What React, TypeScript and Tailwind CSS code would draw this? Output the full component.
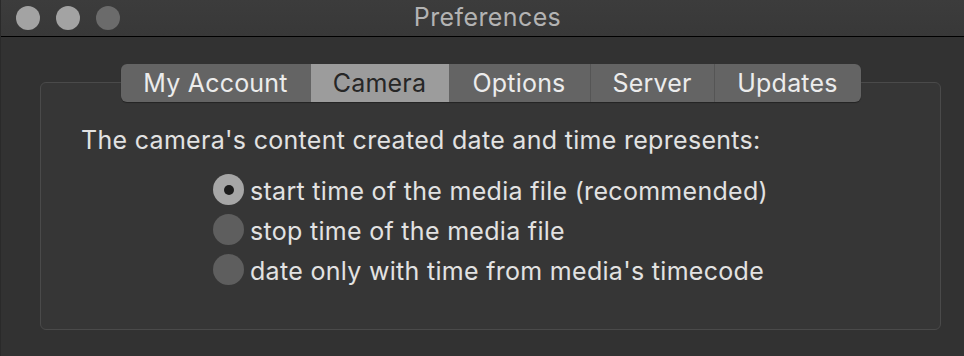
import { useState } from 'react';

const tabs = ['My Account', 'Camera', 'Options', 'Server', 'Updates'];
const tabWidths = ['w-[190px]', 'w-[138px]', 'w-[141px]', 'w-[124px]', 'w-[147px]'];

const options = [
  'start time of the media file (recommended)',
  'stop time of the media file',
  "date only with time from media's timecode",
];

export default function App() {
  const [tab, setTab] = useState(1);
  const [choice, setChoice] = useState(0);

  return (
    <div
      className="w-[964px] h-[356px] bg-[#323232] flex flex-col overflow-hidden border-l border-[#2a2a2a]"
      style={{ fontFamily: 'Inter, "Liberation Sans", sans-serif' }}
    >
      {/* title bar */}
      <div className="h-[37px] shrink-0 bg-gradient-to-b from-[#3c3c3c] to-[#383838] border-b border-black grid grid-cols-[200px_1fr_200px] items-center">
        <div className="flex items-center gap-[16px] pl-[15px]">
          <span className="w-[24px] h-[24px] rounded-full bg-[#a3a3a3]" />
          <span className="w-[24px] h-[24px] rounded-full bg-[#a3a3a3]" />
          <span className="w-[24px] h-[24px] rounded-full bg-[#6b6b6b]" />
        </div>
        <div className="text-center text-[25px] tracking-[0.4px] leading-none text-[#b3b3b3] pl-[10px] pb-[2px]">Preferences</div>
        <div />
      </div>

      {/* content */}
      <div className="pl-[39px] pt-[27px]">
        <div className="relative z-10 flex justify-center w-[901px]">
          <div className="flex h-[38px] rounded-[6px] overflow-hidden bg-[#646464] shadow-[0_1px_1px_rgba(0,0,0,0.35)]">
            {tabs.map((t, i) => (
              <button
                key={t}
                onClick={() => setTab(i)}
                className={`${tabWidths[i]} h-full flex items-center justify-center text-[25px] tracking-[0.2px] leading-none ${
                  i > 0 && i !== tab && i - 1 !== tab ? 'border-l border-[#555555]' : ''
                } ${i === tab ? 'bg-[#9c9c9c] text-[#262626]' : 'text-[#ececec]'}`}
              >
                {t}
              </button>
            ))}
          </div>
        </div>

        <div className="-mt-[20px] w-[901px] h-[248px] rounded-[6px] border border-[#4a4a4a] bg-[#363636] pt-[42px] pl-[40px]">
          <p className="text-[25px] tracking-[0.3px] leading-[30px] text-[#e2e2e2]">
            The camera's content created date and time represents:
          </p>
          <div className="mt-[16px] pl-[132px] flex flex-col">
            {options.map((o, i) => (
              <div key={o} className="flex items-start h-[40px] cursor-default" onClick={() => setChoice(i)}>
                <span
                  className={`mt-[3px] w-[31px] h-[31px] shrink-0 rounded-full flex items-center justify-center ${
                    i === choice ? 'bg-[#a6a6a6]' : 'bg-[#5e5e5e]'
                  }`}
                >
                  {i === choice && <span className="w-[10px] h-[10px] rounded-full bg-[#1c1c1c]" />}
                </span>
                <span className="ml-[6px] text-[25px] tracking-[0.3px] leading-[40px] text-[#e2e2e2]">{o}</span>
              </div>
            ))}
          </div>
        </div>
      </div>
    </div>
  );
}
